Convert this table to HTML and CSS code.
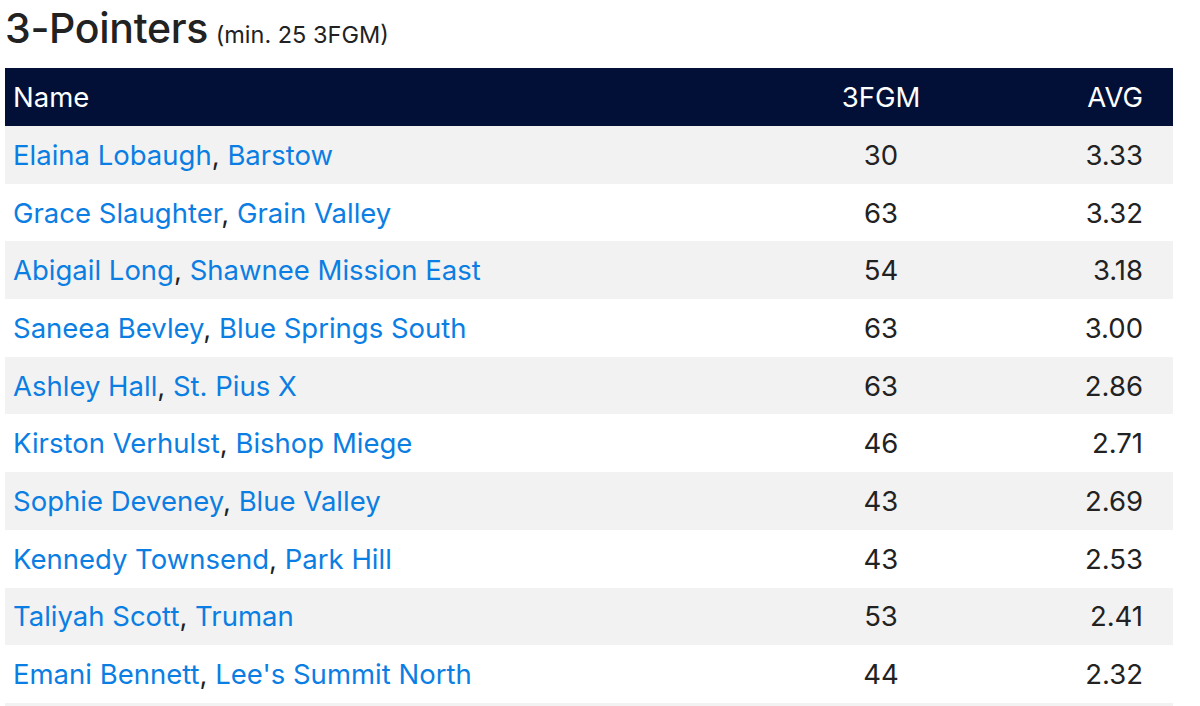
FILE: index.html
```html
<!DOCTYPE html>
<html>
<head>
<meta charset="utf-8">
<link rel="stylesheet" href="styles.css">
</head>
<body>
<div class="page">
  <h2 class="title">3-Pointers <small class="sub">(min. 25 3FGM)</small></h2>
  <table class="stats">
    <colgroup><col class="c-name"><col class="c-num"><col class="c-avg"></colgroup>
    <thead>
      <tr><th class="name">Name</th><th class="num">3FGM</th><th class="avg">AVG</th></tr>
    </thead>
    <tbody>
      <tr><td class="name"><a href="#">Elaina Lobaugh</a>, <a href="#">Barstow</a></td><td class="num">30</td><td class="avg">3.33</td></tr>
      <tr><td class="name"><a href="#">Grace Slaughter</a>, <a href="#">Grain Valley</a></td><td class="num">63</td><td class="avg">3.32</td></tr>
      <tr><td class="name"><a href="#">Abigail Long</a>, <a href="#">Shawnee Mission East</a></td><td class="num">54</td><td class="avg">3.18</td></tr>
      <tr><td class="name"><a href="#">Saneea Bevley</a>, <a href="#">Blue Springs South</a></td><td class="num">63</td><td class="avg">3.00</td></tr>
      <tr><td class="name"><a href="#">Ashley Hall</a>, <a href="#">St. Pius X</a></td><td class="num">63</td><td class="avg">2.86</td></tr>
      <tr><td class="name"><a href="#">Kirston Verhulst</a>, <a href="#">Bishop Miege</a></td><td class="num">46</td><td class="avg">2.71</td></tr>
      <tr><td class="name"><a href="#">Sophie Deveney</a>, <a href="#">Blue Valley</a></td><td class="num">43</td><td class="avg">2.69</td></tr>
      <tr><td class="name"><a href="#">Kennedy Townsend</a>, <a href="#">Park Hill</a></td><td class="num">43</td><td class="avg">2.53</td></tr>
      <tr><td class="name"><a href="#">Taliyah Scott</a>, <a href="#">Truman</a></td><td class="num">53</td><td class="avg">2.41</td></tr>
      <tr><td class="name"><a href="#">Emani Bennett</a>, <a href="#">Lee's Summit North</a></td><td class="num">44</td><td class="avg">2.32</td></tr>
      <tr><td class="name">&nbsp;</td><td class="num"></td><td class="avg"></td></tr>
    </tbody>
  </table>
</div>
</body>
</html>
```

FILE: styles.css
```css
html, body {
  margin: 0;
  padding: 0;
  background: #ffffff;
}
html {
  height: 706px;
  overflow: hidden;
}
body {
  font-family: Inter, "Liberation Sans", Arial, sans-serif;
  color: #222222;
  height: 706px;
  overflow: hidden;
}
.page {
  padding: 0 27px 0 5px;
}
.title {
  margin: 0;
  padding-top: 4px;
  height: 64px;
  box-sizing: border-box;
  font-size: 41px;
  font-weight: 500;
  line-height: 48px;
  color: #222222;
  letter-spacing: -0.3px;
}
.sub {
  font-size: 23.5px;
  font-weight: 400;
  letter-spacing: 0;
  margin-left: -3px;
}
.stats {
  width: 100%;
  border-collapse: collapse;
  border-spacing: 0;
  margin-top: 4px;
}
.c-num { width: 180px; }
.c-avg { width: 202px; }
.stats th {
  background: #021038;
  color: #ffffff;
  font-weight: 400;
  font-size: 27.5px;
  height: 58px;
  padding: 0;
}
.stats td {
  font-size: 27.5px;
  height: 57.7px;
  padding: 0;
}
.stats tbody tr:nth-child(odd) td {
  background: #f2f2f2;
}
.name {
  text-align: left;
  padding-left: 8px !important;
}
.num {
  text-align: center;
}
.avg {
  text-align: right;
  padding-right: 30px !important;
}
.stats a {
  color: #0b7ee3;
  text-decoration: none;
}
```
